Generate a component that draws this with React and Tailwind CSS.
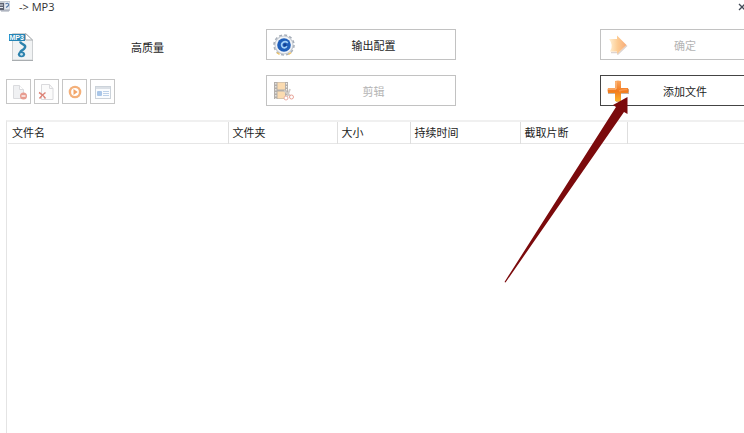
import React from "react";

const FONT = "font-['Noto_Sans_CJK_SC',sans-serif]";

function AppIcon() {
  return (
    <svg className="h-3 w-[10px]" viewBox="0 0 10 12" aria-hidden="true">
      <rect x="0" y="0" width="10" height="10" fill="#c3c8d0" />
      <path d="M0 2h4v7H0z" fill="#5d6272" />
      <path d="M0 4h3M0 6.500h3" stroke="#e8ebf2" />
      <path d="M4.500 1h5v7h-5z" fill="#e4e9f2" />
      <path d="M5.500 3q2-1.500 3 0t-2.500 3.500" fill="none" stroke="#5b7ca8" strokeWidth="1.200" />
      <path d="M1 10h8" stroke="#9aa1b0" />
    </svg>
  );
}

function Mp3Icon() {
  return (
    <svg className="h-[30px] w-[26px]" viewBox="0 0 26 30" aria-hidden="true">
      <path d="M4.500 1.500H18l6.500 6.500v20h-20z" fill="#f1f3f4" stroke="#cdd0d2" />
      <path d="M4 28.500h21" stroke="#a9adb0" />
      <path d="M17.500 1.500V8h7z" fill="#fff" stroke="#a9aeb2" />
      <path d="M12 9.500c1 3.500 6.500 2.500 5 6s-6.500 3-4 6.500" fill="none" stroke="#2c82ad" strokeWidth="2.400" />
      <ellipse cx="13.500" cy="22.300" rx="3.600" ry="2.900" fill="#2c82ad" />
      <circle cx="13.500" cy="22.300" r="1.400" fill="#c3e0ee" />
      <rect x="1" y="2" width="16" height="7" fill="#2585b6" />
      <text x="1.500" y="8" fontSize="7" fontWeight="700" fill="#fff" fontFamily="Liberation Sans, sans-serif">MP3</text>
    </svg>
  );
}

function GearIcon() {
  return (
    <svg className="size-[22px]" viewBox="0 0 20 20" aria-hidden="true">
      <circle cx="10" cy="10" r="8.800" fill="none" stroke="#a5adb8" strokeWidth="2" strokeDasharray="2.600 2" />
      <circle cx="10" cy="10" r="8.200" fill="#f1f3f6" stroke="#c3c9d1" />
      <path d="M3.500 17l2.500 1.500M14 18.500l2.500-1.500" stroke="#edc36b" strokeWidth="1.400" />
      <circle cx="10" cy="10" r="6.200" fill="#1f5fba" />
      <path d="M13.500 8c-3-2.500-6.500 0-5.500 3 .8 2.300 4 2 4.500 0" fill="none" stroke="#9fcdf6" strokeWidth="1.500" />
      <circle cx="10.800" cy="10" r="1.300" fill="#123f92" />
    </svg>
  );
}

function ClipIcon() {
  return (
    <svg className="size-5" viewBox="0 0 20 20" aria-hidden="true">
      <rect x="0" y="1" width="14" height="17" fill="#b3aeaa" />
      <rect x="3.500" y="1.500" width="7.500" height="7" fill="#fbdbb0" />
      <rect x="3.500" y="10.500" width="7.500" height="7" fill="#fbdbb0" />
      <path d="M1.800 2v16M12.500 2v16" stroke="#f1efec" strokeWidth="1.200" strokeDasharray="1.500 1.500" />
      <path d="M10 9.500l7 6M16 8l-3 8" stroke="#cfcac7" strokeWidth="1.800" />
      <circle cx="12" cy="17" r="2" fill="#fff" stroke="#eab0a6" />
      <circle cx="17.500" cy="16" r="2" fill="#fff" stroke="#e9a398" />
    </svg>
  );
}

function NextIcon() {
  return (
    <svg className="size-5" viewBox="0 0 20 20" aria-hidden="true">
      <defs>
        <linearGradient id="next-fill" x1="0" x2="1">
          <stop offset="0" stopColor="#fff1d6" />
          <stop offset=".5" stopColor="#fdcb92" />
          <stop offset="1" stopColor="#f7ab78" />
        </linearGradient>
      </defs>
      <path d="M3 17.500h7v1.500l9-8.500" fill="none" stroke="#ddd4d0" strokeWidth="1.500" />
      <path d="M1 4h8V0.500l9.500 9.500L9 19v-2.500H2q4-6-1-12.500z" fill="url(#next-fill)" />
    </svg>
  );
}

function PlusIcon() {
  return (
    <svg className="h-[22px] w-[22px]" viewBox="0 0 22 22" aria-hidden="true">
      <defs>
        <linearGradient id="plus-fill" x1="0" x2="0" y1="0" y2="1">
          <stop offset="0" stopColor="#fba760" />
          <stop offset=".5" stopColor="#f27a1f" />
          <stop offset="1" stopColor="#fdb52c" />
        </linearGradient>
      </defs>
      <path d="M9 1h5v8h8v5h-8v8H9v-8H1V9h8z" fill="#c4b5aa" />
      <path d="M8 1q3-1 6 0v7h7q1 3 0 5h-7v8q-3 1-6 0v-8H1q-1-3 0-5h7z" fill="url(#plus-fill)" />
      <path d="M1 9h8V1.500" fill="none" stroke="#fdc796" />
      <path d="M12 11q4-2 8-1.500" fill="none" stroke="#f9964a" strokeWidth="1.500" />
    </svg>
  );
}

function RemoveIcon() {
  return (
    <svg className="size-[18px]" viewBox="0 0 18 18" aria-hidden="true">
      <path d="M3.500 2.500h6l4 4v9h-10z" fill="#f0f1f3" stroke="#dadbde" />
      <path d="M9.500 2.500v4h4" fill="#fff" stroke="#dadbde" />
      <circle cx="13.500" cy="13" r="3.500" fill="#e79c90" />
      <path d="M11.500 13h4" stroke="#fff" strokeWidth="1.300" />
    </svg>
  );
}

function ClearIcon() {
  return (
    <svg className="size-[18px]" viewBox="0 0 18 18" aria-hidden="true">
      <path d="M3.500 1.500h8l3.500 4v11H3.500z" fill="#fbfbfb" stroke="#dadadd" />
      <path d="M11.500 1.500v4H15" fill="none" stroke="#dadadd" />
      <path d="M1 9.500q4 2 6.500 6M7.500 9.500q-4 3-6 6" fill="none" stroke="#dd8478" strokeWidth="1.500" />
    </svg>
  );
}

function PlayIcon() {
  return (
    <svg className="size-[18px]" viewBox="0 0 18 18" aria-hidden="true">
      <circle cx="9" cy="9" r="6.300" fill="#f4b07a" />
      <circle cx="9" cy="9" r="3.900" fill="#fff" />
      <path d="M7.500 6l4.200 3-4.200 3z" fill="#f2a467" />
    </svg>
  );
}

function InfoIcon() {
  return (
    <svg className="size-[18px]" viewBox="0 0 18 18" aria-hidden="true">
      <rect x="1.500" y="3.500" width="15" height="12" fill="#fafcfe" stroke="#ccd3da" />
      <path d="M2 5h14" stroke="#dbe0e6" strokeWidth="2" />
      <rect x="3" y="8" width="5" height="5" rx="1" fill="#a9c6e8" />
      <path d="M9 8.500h6M9 10.500h6M9 12.500h6" stroke="#bdd1e8" />
    </svg>
  );
}

function ToolButton({ label, children }) {
  return (
    <button type="button" disabled aria-label={label} className="flex size-[25px] items-center justify-center border border-[#c6c6c6] bg-white">
      {children}
    </button>
  );
}

function ActionButton({ icon, label, disabled = false, className }) {
  return (
    <button type="button" disabled={disabled} className={`flex h-[31px] items-center border bg-white pl-[6px] pr-[3px] text-[11px] leading-4 ${className}`}>
      <span className="flex w-[22px] justify-center">{icon}</span>
      <span className="flex-1 text-center">{label}</span>
    </button>
  );
}

const COLUMNS = [
  { label: "文件名", className: "w-[220px]" },
  { label: "文件夹", className: "w-[109px]" },
  { label: "大小", className: "w-[73px]" },
  { label: "持续时间", className: "w-[110px]" },
  { label: "截取片断", className: "w-[107px]" },
];

export default function App() {
  return (
    <div className={`relative flex min-h-screen flex-col overflow-hidden bg-white text-[#1c1c1c] ${FONT}`}>
      <header className="flex h-[13px] items-center">
        <AppIcon />
        <h1 className="flex-1 pl-[9px] font-['Open_Sans',sans-serif] text-[11px] leading-3 text-[#333]">-&gt; MP3</h1>
        <button type="button" aria-label="关闭" className="-mr-1 flex size-3 items-center justify-center">
          <svg className="size-2" viewBox="0 0 8 8" aria-hidden="true">
            <path d="M1 1l6 6M7 1L1 7" stroke="#444b57" strokeWidth="1.300" />
          </svg>
        </button>
      </header>

      <main className="flex flex-1 flex-col pl-[6px] pt-4">
        <div className="flex">
          <section className="flex w-[260px] flex-col justify-between">
            <div className="flex h-9 items-center pl-[2px]">
              <Mp3Icon />
              <p className="pl-[97px] text-[11px] leading-4">高质量</p>
            </div>
            <div className="flex gap-[3px] pb-[2px]">
              <ToolButton label="移除"><RemoveIcon /></ToolButton>
              <ToolButton label="清空列表"><ClearIcon /></ToolButton>
              <ToolButton label="播放"><PlayIcon /></ToolButton>
              <ToolButton label="文件信息"><InfoIcon /></ToolButton>
            </div>
          </section>
          <section className="flex w-[190px] flex-col gap-[15px]">
            <ActionButton icon={<GearIcon />} label="输出配置" className="border-[#c2c2c2]" />
            <ActionButton icon={<ClipIcon />} label="剪辑" disabled className="border-[#c2c2c2] text-[#b4b4b4]" />
          </section>
          <section className="-mr-px ml-36 flex flex-1 flex-col gap-[15px]">
            <ActionButton icon={<NextIcon />} label="确定" disabled className="border-[#c2c2c2] text-[#b4b4b4]" />
            <ActionButton icon={<PlusIcon />} label="添加文件" className="border-[#444]" />
          </section>
        </div>

        <div className="mt-[14px] flex-1 border-l border-t-2 border-l-[#e4e4e4] border-t-[#f0f0f0] pl-px">
          <table className="w-full table-fixed border-collapse text-[11px] leading-4">
            <thead>
              <tr className="h-[21px] border-b border-[#e6e6e6]">
                {COLUMNS.map((c) => (
                  <th key={c.label} scope="col" className={`border-r border-[#dedede] p-0 pl-1 text-left font-normal ${c.className}`}>
                    {c.label}
                  </th>
                ))}
                <td />
              </tr>
            </thead>
          </table>
        </div>
      </main>

      <svg className="pointer-events-none absolute left-[504px] top-24 h-[188px] w-[126px]" viewBox="0 0 126 188" aria-hidden="true">
        <path d="M.5 186L112 11l-3-2L123.500 1v17l-3.500-2L1.500 186.500z" fill="#7b0a0c" />
      </svg>
    </div>
  );
}
